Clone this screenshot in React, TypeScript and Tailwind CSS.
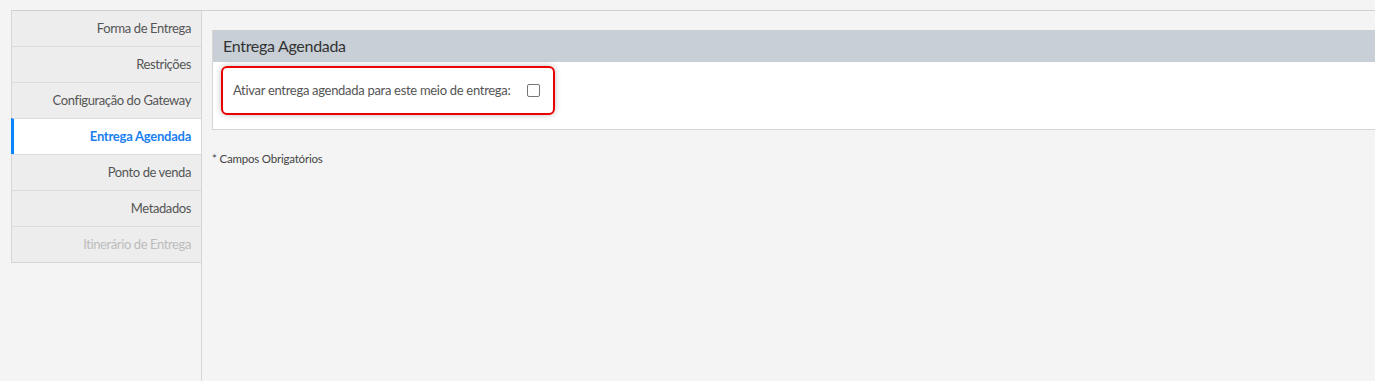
import React from "react";

const items = [
  { label: "Forma de Entrega", state: "normal" },
  { label: "Restrições", state: "normal" },
  { label: "Configuração do Gateway", state: "normal" },
  { label: "Entrega Agendada", state: "active" },
  { label: "Ponto de venda", state: "normal" },
  { label: "Metadados", state: "normal" },
  { label: "Itinerário de Entrega", state: "disabled" },
];

export default function App() {
  return (
    <div
      className="w-[1375px] h-[381px] bg-[#f4f4f4] overflow-hidden pt-[10px] pl-[11px]"
      style={{ fontFamily: "Lato, 'Liberation Sans', sans-serif" }}
    >
      <div className="flex h-full border-t border-[#d0d0d0]">
        <div className="w-[191px] shrink-0 border-r border-[#d6d6d6] h-full">
          <div className="border-l border-b border-[#d6d6d6]">
            {items.map((it, i) => (
              <div
                key={it.label}
                className={
                  "flex items-center justify-end pr-[10px] text-[13px] " +
                  (i > 0 ? "h-[36px] border-t border-[#dcdcdc] " : "h-[35px] ") +
                  (it.state === "active"
                    ? "bg-white text-[#1a80f0] font-bold tracking-[-0.25px] border-l-[3px] border-l-[#0a84ff] -ml-px"
                    : it.state === "disabled"
                    ? "bg-[#ededed] text-[#bcbcbc] tracking-[-0.4px]"
                    : "bg-[#ededed] text-[#555] tracking-[-0.4px]")
                }
              >
                {it.label}
              </div>
            ))}
          </div>
        </div>
        <div className="flex-1 pl-[10px] pt-[19px]">
          <div className="border-l border-b border-[#d6d6d6] bg-white">
            <div className="h-[32px] bg-[#c8cfd6] flex items-center pl-[10px] text-[16px] text-[#333] tracking-[-0.3px]">
              Entrega Agendada
            </div>
            <div className="h-[67px] pt-[4px] pl-[8px]">
              <div className="w-[334px] h-[49px] rounded-[6px] border-2 border-[#ee0000] shadow-[0_0_6px_rgba(0,0,0,0.25)] flex items-center pl-[10px]">
                <span className="text-[13px] text-[#555] tracking-[-0.3px]">
                  Ativar entrega agendada para este meio de entrega:
                </span>
                <span className="ml-[17px] w-[13px] h-[13px] rounded-[2px] border border-[#767676] bg-white" />
              </div>
            </div>
          </div>
          <div className="mt-[20px] text-[11.5px] text-[#444] tracking-[-0.2px]">* Campos Obrigatórios</div>
        </div>
      </div>
    </div>
  );
}
